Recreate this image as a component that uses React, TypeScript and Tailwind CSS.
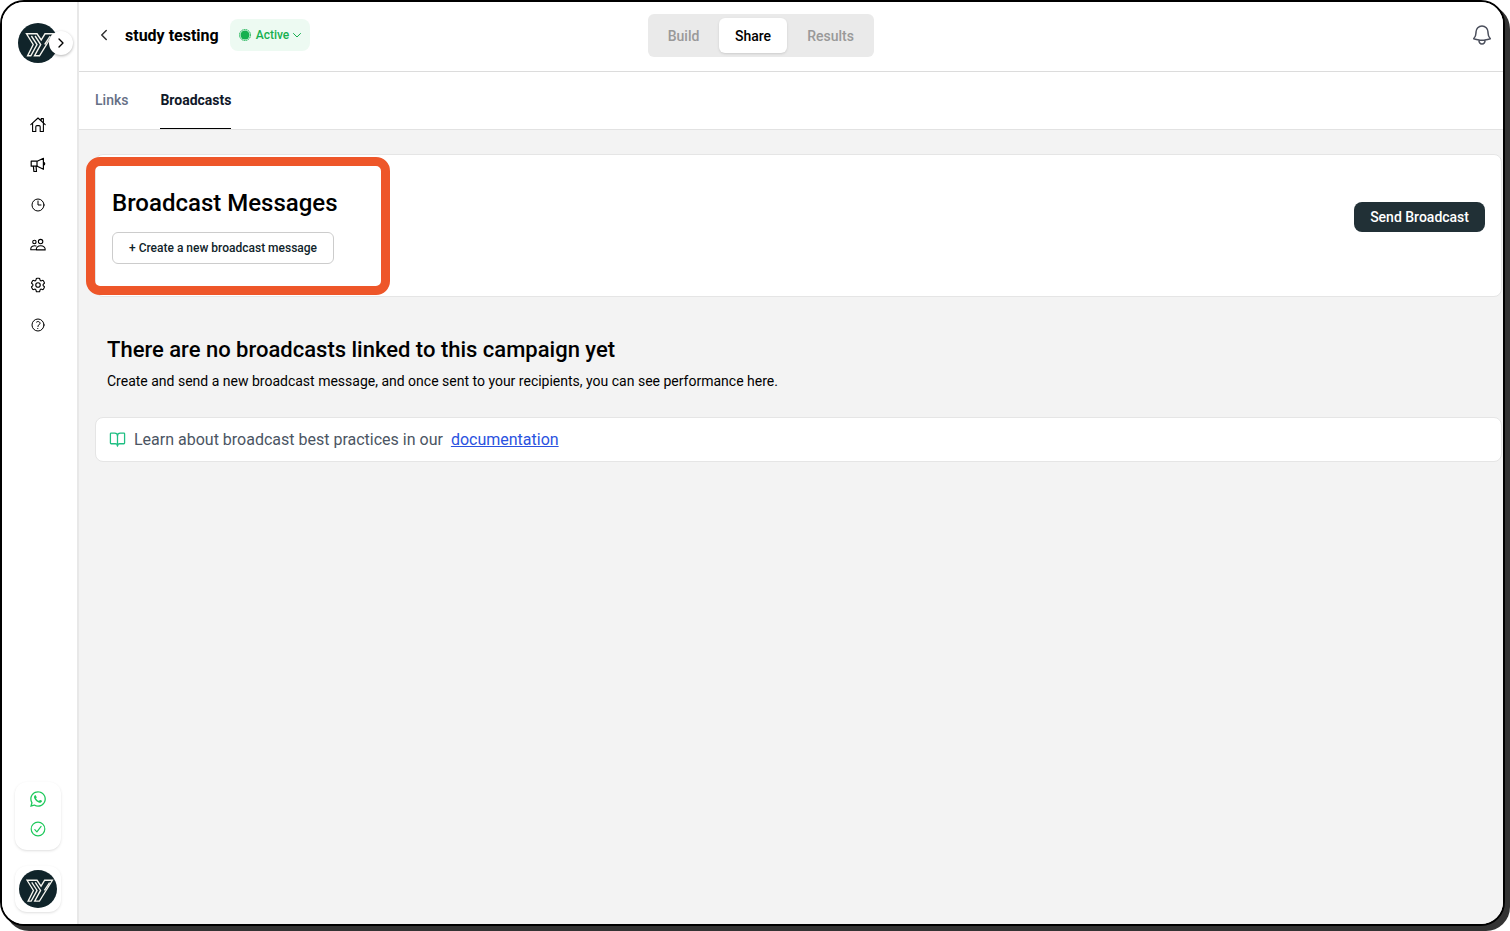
import type { ReactNode } from "react";
import {
  HiOutlineBell,
  HiOutlineClock,
  HiOutlineCog6Tooth,
  HiOutlineQuestionMarkCircle,
} from "react-icons/hi2";
import { FaWhatsapp } from "react-icons/fa";
import { BookOpen, ChevronLeft, ChevronRight } from "lucide-react";

function HomeIcon() {
  return (
    <svg viewBox="0 0 16 16" className="w-4 h-4" fill="none" stroke="currentColor" strokeWidth="1.1" strokeLinejoin="round" strokeLinecap="round">
      <path d="M0.8 7.6 8 1l7.2 6.6M2.6 6.2v8.3h3.2V9.8q0-1.2 1.2-1.2h2q1.2 0 1.2 1.2v4.7h3.2V6.2M11.2 3.6v-2h2.2v4.2" />
    </svg>
  );
}

function MegaphoneIcon() {
  return (
    <svg viewBox="0 0 16 16" className="w-4 h-4" fill="none" stroke="currentColor" strokeWidth="1.2" strokeLinejoin="round" strokeLinecap="round">
      <path d="M1.2 4.2h6l6.2-2.9v11L7.2 9.2h-6z" />
      <path d="M7 4.5v4.5M3.4 9.4l.5 5.1h2.6l-.4-5.1M13.6 5.4c1.5.3 1.5 2.4 0 2.7" />
    </svg>
  );
}

function PeopleIcon() {
  return (
    <svg viewBox="0 0 16 16" className="w-4 h-4" fill="none" stroke="currentColor" strokeWidth="1.1" strokeLinejoin="round" strokeLinecap="round">
      <circle cx="4.4" cy="5" r="1.7" />
      <circle cx="10.6" cy="4.6" r="2.2" />
      <path d="M6 9C3.3 8.2.8 9.5.8 11.8v.9h4.8M6.3 12.9c-.3-2.7 1.7-4.1 4.4-4.1s4.7 1.4 4.5 4.1z" />
    </svg>
  );
}

function CheckCircleIcon() {
  return (
    <svg viewBox="0 0 16 16" className="w-4 h-4" fill="none" stroke="currentColor" strokeWidth="1.2" strokeLinejoin="round" strokeLinecap="round">
      <circle cx="8" cy="8" r="6.8" />
      <path d="M4.8 8.7l2.1 2.1 4.2-5.4" />
    </svg>
  );
}

function Logo({ className }: { className: string }) {
  return (
    <svg viewBox="0 0 40 40" className={className} role="img" aria-label="Logo">
      <circle cx="20" cy="20" r="20" fill="#10242a" />
      <g fill="none" stroke="#f4f4ee" strokeWidth="1.4">
        <path d="M13.4 13l5.6 8.5-6.2 11.3H9.6l5.6-11.3L8.5 10.8H19l4.2 6.2 3.8-6.2h8.2L21.5 32.8h-5l6.2-11.3-5.6-8.5" />
        <path d="M32.2 13.2l-5.5 8.3" />
      </g>
    </svg>
  );
}

const navItems: { label: string; icon: ReactNode }[] = [
  { label: "Home", icon: <HomeIcon /> },
  { label: "Campaigns", icon: <MegaphoneIcon /> },
  { label: "History", icon: <HiOutlineClock className="w-4 h-4" /> },
  { label: "Contacts", icon: <PeopleIcon /> },
  { label: "Settings", icon: <HiOutlineCog6Tooth className="w-[18px] h-[18px] -m-px" /> },
  { label: "Help", icon: <HiOutlineQuestionMarkCircle className="w-4 h-4" /> },
];

function Sidebar() {
  return (
    <aside className="w-[77px] shrink-0 flex flex-col items-center bg-white border-r-2 border-[#e8e8e8] pr-[3px] pt-[21px] pb-3">
      <div className="relative">
        <Logo className="w-10 h-10" />
        <button
          aria-label="Expand menu"
          className="absolute left-[31px] top-2 w-6 h-6 rounded-full bg-white shadow-[0_1px_3px_rgba(0,0,0,0.3)] flex items-center justify-center"
        >
          <ChevronRight className="w-4 h-4" />
        </button>
      </div>

      <nav className="mt-[54px] flex flex-col gap-6">
        {navItems.map((item) => (
          <a key={item.label} href="#" aria-label={item.label} className="block text-black">
            {item.icon}
          </a>
        ))}
      </nav>

      <div className="mt-auto w-[46px] h-[68px] pt-2 rounded-xl bg-white shadow flex flex-col items-center gap-[13px] text-[#1fc95c]">
        <FaWhatsapp className="w-[18px] h-[18px]" />
        <CheckCircleIcon />
      </div>
      <button aria-label="Account" className="mt-4 w-[46px] h-[46px] rounded-xl bg-white shadow flex items-center justify-center">
        <Logo className="w-[38px] h-[38px]" />
      </button>
    </aside>
  );
}

function Header() {
  return (
    <header className="h-[70px] shrink-0 bg-white border-b border-[#dcdcdc] grid grid-cols-[19fr_auto_21fr] items-start">
      <div className="flex items-center pl-4 pt-[17px]">
        <button aria-label="Back" className="text-[#333]">
          <ChevronLeft className="w-[18px] h-[18px]" />
        </button>
        <h1 className="ml-3 pt-0.5 text-base font-bold text-black">study testing</h1>
        <button className="ml-[11px] h-8 px-2 rounded-lg bg-[#edfaf2] text-[#16b04f] text-xs font-medium flex items-center">
          <svg viewBox="0 0 14 14" className="w-[14px] h-[14px] mr-1">
            <circle cx="7" cy="7" r="5.5" fill="none" stroke="currentColor" strokeWidth="1" strokeDasharray="1.5 0.5" />
            <circle cx="7" cy="7" r="4.5" fill="currentColor" />
          </svg>
          Active
          <svg viewBox="0 0 10 10" className="w-[10px] h-[10px] ml-[3px]" fill="none" stroke="currentColor">
            <path d="M1.2 3.2 5 7l3.8-3.8" />
          </svg>
        </button>
      </div>

      <div className="mt-3 h-[43px] p-1 rounded-md bg-[#eaeaea] flex text-sm font-medium text-[#999]">
        <button className="w-[67px] pr-1">Build</button>
        <button className="w-[68px] rounded-md bg-white text-black shadow-sm">Share</button>
        <button className="w-[83px] pl-1">Results</button>
      </div>

      <button aria-label="Notifications" className="justify-self-end mt-[21px] mr-[9px] text-[#4b4f5c]">
        <HiOutlineBell className="w-6 h-6" />
      </button>
    </header>
  );
}

function Tabs() {
  return (
    <nav className="h-[58px] shrink-0 bg-white border-b border-[#e2e2e2] pl-4 flex gap-8 text-sm">
      <a href="#" className="flex items-center pb-px text-[#667085] font-medium">
        Links
      </a>
      <a href="#" className="flex items-center text-[#101828] font-bold border-b border-black">
        Broadcasts
      </a>
    </nav>
  );
}

export default function App() {
  return (
    <div className="h-screen pr-[5px] pb-[5px] bg-white overflow-hidden font-['Roboto',sans-serif] text-black">
      <div className="h-full flex border-2 border-black rounded-3xl overflow-hidden bg-white shadow-[5px_5px_0_#333]">
        <Sidebar />

        <div className="flex-1 min-w-0 flex flex-col">
          <Header />
          <Tabs />

          <main className="flex-1 bg-[#f3f3f3] pl-4 pr-px pt-6">
            <section className="relative h-[143px] px-4 bg-white border border-[#e5e5e5] rounded-lg flex items-start justify-between">
              <div className="pt-8">
                <h2 className="text-2xl font-medium">Broadcast Messages</h2>
                <button className="mt-[13px] h-8 px-4 rounded-md border border-[#ccc] bg-white text-xs font-medium text-[#10242a]">
                  + Create a new broadcast message
                </button>
              </div>
              <button className="mt-[47px] h-[30px] px-4 rounded-lg bg-[#213036] text-sm font-medium text-white">
                Send Broadcast
              </button>
              {/* Callout ring around the create action */}
              <div className="absolute -left-[10px] top-[2px] w-[304px] h-[138px] border-[9px] border-[#ee5629] rounded-[14px] pointer-events-none" />
            </section>

            <section className="mt-[37px] pl-3">
              <h2 className="text-[22px] leading-8 font-medium">There are no broadcasts linked to this campaign yet</h2>
              <p className="mt-[3px] text-sm leading-6">
                Create and send a new broadcast message, and once sent to your recipients, you can see performance here.
              </p>
            </section>

            <div className="mt-6 h-[45px] px-[13px] bg-white border border-[#e5e5e5] rounded-lg flex items-center gap-2 text-[#4b5563]">
              <BookOpen className="w-[17px] h-[17px] text-[#1fbf83]" strokeWidth={1.8} />
              <span>Learn about broadcast best practices in our</span>
              <a href="#" className="text-[#2a52e0] underline">
                documentation
              </a>
            </div>
          </main>
        </div>
      </div>
    </div>
  );
}
